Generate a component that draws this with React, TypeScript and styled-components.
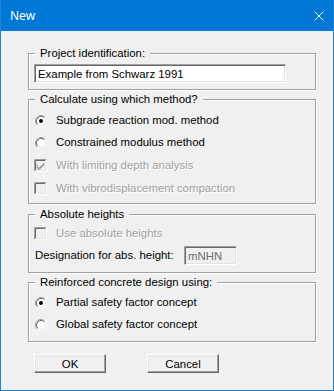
import React from 'react';
import styled, { createGlobalStyle } from 'styled-components';

const GlobalStyle = createGlobalStyle`
  html, body {
    margin: 0;
    padding: 0;
    background: #ffffff;
  }
  body {
    font-family: 'Liberation Sans', Arial, sans-serif;
    font-size: 11.4px;
    color: #000;
  }
`;

const Window = styled.div`
  width: 334px;
  height: 391px;
  box-sizing: border-box;
  border: 1px solid #1883d7;
  border-top: none;
  background: #f0f0f0;
  display: flex;
  flex-direction: column;
`;

const TitleBar = styled.div`
  height: 31px;
  flex: none;
  background: #0078d7;
  display: flex;
  align-items: center;
  justify-content: space-between;
  padding: 0 9px;
  color: #ffffff;
  font-family: 'Noto Sans', 'Open Sans', sans-serif;
  font-size: 12px;
`;

const Body = styled.div`
  padding: 0 17px 0 27px;
  display: flex;
  flex-direction: column;
`;

const Group = styled.div<{ $mt: number; $pb: number }>`
  margin-top: ${(p) => p.$mt}px;
  border: 1px solid #a0a0a0;
  box-shadow: inset 1px 1px 0 #ffffff, 1px 1px 0 #ffffff;
  padding: 0 5px ${(p) => p.$pb}px 5px;
  display: flex;
  flex-direction: column;
`;

const GroupTitle = styled.div`
  align-self: flex-start;
  margin: -7px 0 0 1px;
  padding: 0 5px;
  height: 13px;
  line-height: 13px;
  background: #f0f0f0;
  white-space: nowrap;
`;

const Edit = styled.input<{ $w: number; $mt?: number; $disabled?: boolean }>`
  box-sizing: border-box;
  width: ${(p) => p.$w}px;
  height: 19px;
  margin: ${(p) => p.$mt ?? 0}px 0 0 0;
  padding: 0 2px 0 3px;
  border: 1px solid;
  border-color: #a0a0a0 #ffffff #ffffff #a0a0a0;
  box-shadow: inset 1px 1px 0 #696969, inset -1px -1px 0 #e3e3e3;
  background: ${(p) => (p.$disabled ? '#f0f0f0' : '#ffffff')};
  color: ${(p) => (p.$disabled ? '#6d6d6d' : '#000000')};
  font-family: 'Liberation Sans', Arial, sans-serif;
  font-size: 11.4px;
  outline: none;
`;

const Row = styled.div<{ $mt: number; $h?: number }>`
  margin-top: ${(p) => p.$mt}px;
  height: ${(p) => p.$h ?? 13}px;
  display: flex;
  align-items: center;
  white-space: nowrap;
`;

const OptionLabel = styled.span<{ $disabled?: boolean }>`
  margin-left: 9px;
  line-height: 13px;
  color: ${(p) => (p.$disabled ? '#a0a0a0' : '#000000')};
  text-shadow: ${(p) => (p.$disabled ? '1px 1px 0 #ffffff' : 'none')};
`;

const FieldLabel = styled.span`
  width: 149px;
  padding-left: 1px;
  line-height: 13px;
`;

const RadioIcon = styled.svg`
  flex: none;
  width: 12px;
  height: 12px;
  margin-left: 1px;
`;

const CheckIcon = styled.svg`
  flex: none;
  width: 13px;
  height: 13px;
`;

const ButtonRow = styled.div`
  margin-top: 12px;
  padding-left: 6px;
  display: flex;
  gap: 41px;
`;

const Button = styled.button`
  box-sizing: border-box;
  width: 72px;
  height: 19px;
  padding: 0;
  border: 1px solid;
  border-color: #ffffff #696969 #696969 #ffffff;
  box-shadow: inset -1px -1px 0 #a0a0a0, inset 1px 1px 0 #e3e3e3;
  background: #f0f0f0;
  font-family: 'Liberation Sans', Arial, sans-serif;
  font-size: 11.4px;
  color: #000;
`;

const Radio = ({ checked }: { checked?: boolean }) => (
  <RadioIcon viewBox="0 0 12 12">
    <circle cx="6" cy="6" r="4.5" fill="#ffffff" />
    <path d="M2.11 9.89 A5.5 5.5 0 0 1 9.89 2.11" fill="none" stroke="#a0a0a0" />
    <path d="M9.89 2.11 A5.5 5.5 0 0 1 2.11 9.89" fill="none" stroke="#ffffff" />
    <path d="M2.82 9.18 A4.5 4.5 0 0 1 9.18 2.82" fill="none" stroke="#696969" />
    <path d="M9.18 2.82 A4.5 4.5 0 0 1 2.82 9.18" fill="none" stroke="#e3e3e3" />
    {checked && <circle cx="6" cy="6" r="2" fill="#000000" />}
  </RadioIcon>
);

const Check = ({ checked }: { checked?: boolean }) => (
  <CheckIcon viewBox="0 0 13 13">
    <rect x="0" y="0" width="13" height="13" fill="#f0f0f0" />
    <path d="M0.5 12.5 V0.5 H12.5" fill="none" stroke="#a0a0a0" />
    <path d="M1.5 11.5 V1.5 H11.5" fill="none" stroke="#696969" />
    <path d="M0.5 12.5 H12.5 V0.5" fill="none" stroke="#ffffff" />
    <path d="M1.5 11.5 H11.5 V1.5" fill="none" stroke="#e3e3e3" />
    {checked && (
      <path d="M3 5 L3 7 L5 9 L10 4 L10 6 L5 11 L3 9 Z" fill="#a0a0a0" stroke="#a0a0a0" strokeWidth="0.6" />
    )}
  </CheckIcon>
);

const CloseIcon = () => (
  <svg width="10" height="10" viewBox="0 0 10 10">
    <path d="M0.5 0.5 L9.5 9.5 M9.5 0.5 L0.5 9.5" stroke="#ffffff" strokeWidth="1" />
  </svg>
);

export default function App() {
  return (
    <>
      <GlobalStyle />
      <Window>
        <TitleBar>
          <span>New</span>
          <CloseIcon />
        </TitleBar>
        <Body>
          <Group $mt={22} $pb={6}>
            <GroupTitle>Project identification:</GroupTitle>
            <Edit $w={252} $mt={4} defaultValue="Example from Schwarz 1991" />
          </Group>

          <Group $mt={9} $pb={8}>
            <GroupTitle>Calculate using which method?</GroupTitle>
            <Row $mt={8}>
              <Radio checked />
              <OptionLabel>Subgrade reaction mod. method</OptionLabel>
            </Row>
            <Row $mt={9}>
              <Radio />
              <OptionLabel>Constrained modulus method</OptionLabel>
            </Row>
            <Row $mt={10}>
              <Check checked />
              <OptionLabel $disabled>With limiting depth analysis</OptionLabel>
            </Row>
            <Row $mt={10}>
              <Check />
              <OptionLabel $disabled>With vibrodisplacement compaction</OptionLabel>
            </Row>
          </Group>

          <Group $mt={10} $pb={7}>
            <GroupTitle>Absolute heights</GroupTitle>
            <Row $mt={6}>
              <Check />
              <OptionLabel $disabled>Use absolute heights</OptionLabel>
            </Row>
            <Row $mt={6} $h={19}>
              <FieldLabel>Designation for abs. height:</FieldLabel>
              <Edit $w={53} $disabled readOnly defaultValue="mNHN" />
            </Row>
          </Group>

          <Group $mt={9} $pb={10}>
            <GroupTitle>Reinforced concrete design using:</GroupTitle>
            <Row $mt={7}>
              <Radio checked />
              <OptionLabel>Partial safety factor concept</OptionLabel>
            </Row>
            <Row $mt={9}>
              <Radio />
              <OptionLabel>Global safety factor concept</OptionLabel>
            </Row>
          </Group>

          <ButtonRow>
            <Button>OK</Button>
            <Button>Cancel</Button>
          </ButtonRow>
        </Body>
      </Window>
    </>
  );
}
